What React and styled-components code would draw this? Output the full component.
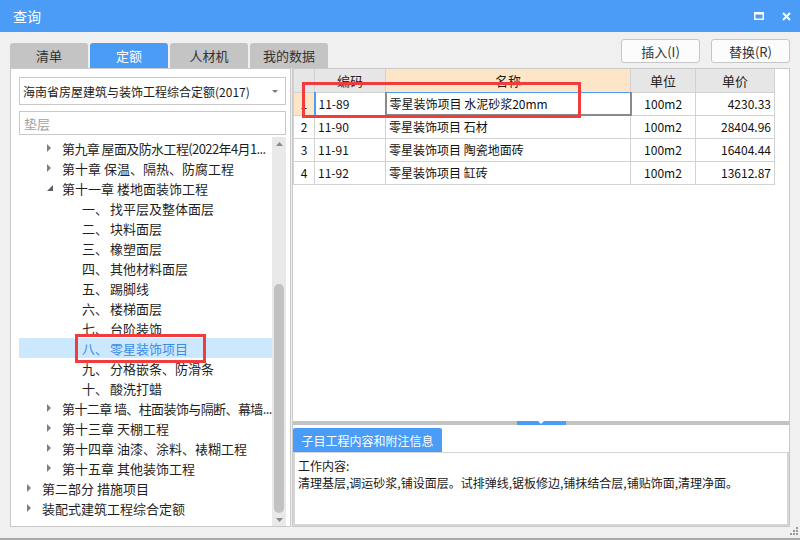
import React from 'react'
import styled, { createGlobalStyle } from 'styled-components'

const GlobalStyle = createGlobalStyle`
    html, body {
        margin: 0;
        padding: 0;
    }
    body {
        width: 800px;
        height: 540px;
        overflow: hidden;
        background: #f0f0f0;
        font-family: "Noto Sans CJK SC", "Noto Sans", sans-serif;
    }
    * {
        box-sizing: border-box;
    }
`

const Window = styled.div`
    position: relative;
    display: flex;
    flex-direction: column;
    width: 800px;
    height: 540px;
    background: #f0f0f0;
    border-bottom: 2px solid #a9a9a9;
`

const TitleBar = styled.div`
    display: flex;
    align-items: center;
    justify-content: space-between;
    height: 32px;
    padding: 0 9px 0 13px;
    background: #4a9cf6;
    color: #fff;
    font-size: 14px;
`

const WinButtons = styled.div`
    display: flex;
    align-items: center;
    gap: 18px;
`

const Body = styled.div`
    display: flex;
    flex-direction: column;
    flex: 1;
    padding: 0 10px;
`

const TopRow = styled.div`
    display: flex;
    justify-content: space-between;
    height: 36px;
`

const Tabs = styled.div`
    display: flex;
    align-items: flex-end;
    gap: 2px;
`

const Tab = styled.div`
    width: 78px;
    height: 25px;
    display: flex;
    align-items: center;
    justify-content: center;
    font-size: 13px;
    border-radius: 3px 3px 0 0;
    background: ${p => p.$active ? '#4a9cf6' : '#c4c4c4'};
    color: ${p => p.$active ? '#fff' : '#333'};
`

const Actions = styled.div`
    display: flex;
    gap: 11px;
    padding-top: 7px;
`

const Button = styled.div`
    width: 79px;
    height: 24px;
    display: flex;
    align-items: center;
    justify-content: center;
    background: #fcfcfc;
    border: 1px solid #c6c6c6;
    border-radius: 3px;
    font-size: 13px;
    color: #333;
`

const Main = styled.div`
    display: flex;
    gap: 1px;
    height: 459px;
`

const LeftPanel = styled.div`
    display: flex;
    flex-direction: column;
    width: 281px;
    background: #fff;
    border: 1px solid #c9c9c9;
    padding: 8px 4px 0 8px;
`

const Select = styled.div`
    display: flex;
    align-items: center;
    justify-content: space-between;
    height: 28px;
    padding: 0 7px 0 3px;
    border: 1px solid #c9c9c9;
    font-size: 12px;
    color: #1a1a1a;
    white-space: nowrap;
`

const Search = styled.div`
    display: flex;
    align-items: center;
    height: 24px;
    margin-top: 6px;
    padding-left: 4px;
    border: 1px solid #c9c9c9;
    font-size: 13px;
    color: #a3a3a3;
`

const TreeWrap = styled.div`
    display: flex;
    flex: 1;
    margin-top: 2px;
    min-height: 0;
`

const Tree = styled.div`
    flex: 1;
    padding-top: 1px;
    overflow: hidden;
`

const Row = styled.div`
    display: flex;
    align-items: center;
    height: 20px;
    padding-left: ${p => 8 + p.$level * 20}px;
    font-size: 13px;
    white-space: nowrap;
    overflow: hidden;
    letter-spacing: ${p => p.$tight ? '-0.6px' : 'normal'};
    background: ${p => p.$selected ? '#cce8ff' : 'transparent'};
    color: ${p => p.$selected ? '#3b8ae6' : '#1f1f1f'};
`

const Toggle = styled.span`
    display: flex;
    align-items: center;
    flex: none;
    width: 15px;
    height: 20px;
`

const Num = styled.span`
    display: inline-block;
    flex: none;
    width: 28px;
`

const Scrollbar = styled.div`
    display: flex;
    flex-direction: column;
    align-items: center;
    width: 14px;
    background: #e9e9e9;
`

const ScrollArrow = styled.div`
    display: flex;
    align-items: center;
    justify-content: center;
    height: 14px;
`

const Track = styled.div`
    flex: 1;
    display: flex;
    flex-direction: column;
`

const Thumb = styled.div`
    width: 10px;
    height: ${p => p.$size}px;
    margin-top: ${p => p.$offset}px;
    border-radius: 5px;
    background: #c2c2c2;
`

const RightPanel = styled.div`
    display: flex;
    flex-direction: column;
    width: 498px;
    background: #fff;
    border: 1px solid #c9c9c9;
`

const TableArea = styled.div`
    height: 352px;
`

const Table = styled.table`
    border-collapse: collapse;
    table-layout: fixed;
    width: 481px;
`

const HeadCell = styled.th`
    height: 23px;
    padding: 0;
    font-size: 13px;
    font-weight: normal;
    color: #222;
    background: ${p => p.$active ? '#fde6c8' : '#e6e6e6'};
    border: 1px solid #d2d2d2;
    border-top: none;
    border-bottom: 1px solid ${p => p.$active ? '#4a9cf6' : '#d2d2d2'};
`

const Cell = styled.td`
    height: 23px;
    padding: 0 3px;
    font-size: 12px;
    color: #111;
    white-space: nowrap;
    overflow: hidden;
    text-align: ${p => p.$align || 'left'};
    background: ${p => p.$mark ? '#fde6c8' : '#fff'};
    border: 1px solid #d2d2d2;
    ${p => p.$lead && 'border-left: 2px solid #4a9cf6;'}
    ${p => p.$focus && `
        border: 2px solid #8a8a8a;
        border-top: 1px solid #4a9cf6;
    `}
`

const Splitter = styled.div`
    display: flex;
    justify-content: center;
    height: 4px;
    background: #c3c3c3;
`

const Handle = styled.div`
    display: flex;
    justify-content: center;
    width: 49px;
    background: #4a9cf6;
`

const InfoTabs = styled.div`
    display: flex;
    height: 27px;
    padding-top: 3px;
`

const InfoTab = styled.div`
    display: flex;
    align-items: center;
    justify-content: center;
    width: 149px;
    background: #4a9cf6;
    color: #fff;
    font-size: 12px;
    border-radius: 2px 2px 0 0;
`

const InfoBox = styled.div`
    flex: 1;
    padding: 4px 3px;
    border: 2px solid #d6d6d6;
    border-top-width: 1px;
    font-size: 12px;
    line-height: 17px;
    color: #1a1a1a;
`

const Mark = styled.div`
    position: absolute;
    left: ${p => p.$x}px;
    top: ${p => p.$y}px;
    width: ${p => p.$w}px;
    height: ${p => p.$h}px;
    border: 3px solid #f03c3c;
    pointer-events: none;
`

const Grip = styled.svg`
    position: absolute;
    right: 2px;
    bottom: 3px;
`

const treeRows = [
    { level: 1, toggle: 'closed', text: '第九章 屋面及防水工程(2022年4月1...', tight: true },
    { level: 1, toggle: 'closed', text: '第十章 保温、隔热、防腐工程' },
    { level: 1, toggle: 'open', text: '第十一章 楼地面装饰工程' },
    { level: 2, num: '一、', text: '找平层及整体面层' },
    { level: 2, num: '二、', text: '块料面层' },
    { level: 2, num: '三、', text: '橡塑面层' },
    { level: 2, num: '四、', text: '其他材料面层' },
    { level: 2, num: '五、', text: '踢脚线' },
    { level: 2, num: '六、', text: '楼梯面层' },
    { level: 2, num: '七、', text: '台阶装饰' },
    { level: 2, num: '八、', text: '零星装饰项目', selected: true },
    { level: 2, num: '九、', text: '分格嵌条、防滑条' },
    { level: 2, num: '十、', text: '酸洗打蜡' },
    { level: 1, toggle: 'closed', text: '第十二章 墙、柱面装饰与隔断、幕墙...', tight: true },
    { level: 1, toggle: 'closed', text: '第十三章 天棚工程' },
    { level: 1, toggle: 'closed', text: '第十四章 油漆、涂料、裱糊工程' },
    { level: 1, toggle: 'closed', text: '第十五章 其他装饰工程' },
    { level: 0, toggle: 'closed', text: '第二部分 措施项目' },
    { level: 0, toggle: 'closed', text: '装配式建筑工程综合定额' },
]

const items = [
    { code: '11-89', name: '零星装饰项目  水泥砂浆20mm', unit: '100m2', price: '4230.33' },
    { code: '11-90', name: '零星装饰项目  石材', unit: '100m2', price: '28404.96' },
    { code: '11-91', name: '零星装饰项目  陶瓷地面砖', unit: '100m2', price: '16404.44' },
    { code: '11-92', name: '零星装饰项目  缸砖', unit: '100m2', price: '13612.87' },
]

const Arrow = ({ type }) => {
    if (type === 'open') {
        return (
            <svg width="6" height="6" viewBox="0 0 6 6">
                <path d="M6 0 L6 6 L0 6 Z" fill="#5f5f5f" />
            </svg>
        )
    }
    if (type === 'closed') {
        return (
            <svg width="4" height="8" viewBox="0 0 4 8">
                <path d="M0 0 L4 4 L0 8 Z" fill="#808080" />
            </svg>
        )
    }
    return null
}

const Triangle = ({ down, color = '#8a8a8a', w = 7, h = 4 }) => (
    <svg width={w} height={h} viewBox={`0 0 ${w} ${h}`}>
        <path d={down ? `M0 0 L${w} 0 L${w / 2} ${h} Z` : `M0 ${h} L${w} ${h} L${w / 2} 0 Z`} fill={color} />
    </svg>
)

const App = () => {
    return (
        <Window>
            <GlobalStyle />
            <TitleBar>
                <span>查询</span>
                <WinButtons>
                    <svg width="10" height="8" viewBox="0 0 10 8">
                        <rect x="0.75" y="1" width="8.5" height="6.25" fill="none" stroke="#fff" strokeWidth="1.5" />
                        <rect x="0" y="0" width="10" height="2.5" fill="#fff" />
                    </svg>
                    <svg width="9" height="9" viewBox="0 0 9 9">
                        <path d="M1 1 L8 8 M8 1 L1 8" stroke="#fff" strokeWidth="2" />
                    </svg>
                </WinButtons>
            </TitleBar>
            <Body>
                <TopRow>
                    <Tabs>
                        <Tab>清单</Tab>
                        <Tab $active>定额</Tab>
                        <Tab>人材机</Tab>
                        <Tab>我的数据</Tab>
                    </Tabs>
                    <Actions>
                        <Button>插入(I)</Button>
                        <Button>替换(R)</Button>
                    </Actions>
                </TopRow>
                <Main>
                    <LeftPanel>
                        <Select>
                            <span>海南省房屋建筑与装饰工程综合定额(2017)</span>
                            <Triangle down w={6} h={3} color="#7a7a7a" />
                        </Select>
                        <Search>垫层</Search>
                        <TreeWrap>
                            <Tree>
                                {treeRows.map((r, i) => (
                                    <Row key={i} $level={r.level} $selected={r.selected} $tight={r.tight}>
                                        <Toggle><Arrow type={r.toggle} /></Toggle>
                                        {r.num && <Num>{r.num}</Num>}
                                        <span>{r.text}</span>
                                    </Row>
                                ))}
                            </Tree>
                            <Scrollbar>
                                <ScrollArrow><Triangle /></ScrollArrow>
                                <Track>
                                    <Thumb $offset={134} $size={229} />
                                </Track>
                                <ScrollArrow><Triangle down /></ScrollArrow>
                            </Scrollbar>
                        </TreeWrap>
                    </LeftPanel>
                    <RightPanel>
                        <TableArea>
                            <Table>
                                <colgroup>
                                    <col style={{ width: 21 }} />
                                    <col style={{ width: 71 }} />
                                    <col style={{ width: 245 }} />
                                    <col style={{ width: 65 }} />
                                    <col style={{ width: 79 }} />
                                </colgroup>
                                <thead>
                                    <tr>
                                        <HeadCell />
                                        <HeadCell>编码</HeadCell>
                                        <HeadCell $active>名称</HeadCell>
                                        <HeadCell>单位</HeadCell>
                                        <HeadCell>单价</HeadCell>
                                    </tr>
                                </thead>
                                <tbody>
                                    {items.map((it, i) => (
                                        <tr key={it.code}>
                                            <Cell $align="center" $mark={i === 0}>{i + 1}</Cell>
                                            <Cell $lead={i === 0}>{it.code}</Cell>
                                            <Cell $focus={i === 0}>{it.name}</Cell>
                                            <Cell $align="center">{it.unit}</Cell>
                                            <Cell $align="right">{it.price}</Cell>
                                        </tr>
                                    ))}
                                </tbody>
                            </Table>
                        </TableArea>
                        <Splitter>
                            <Handle><Triangle down w={6} h={3} color="#fff" /></Handle>
                        </Splitter>
                        <InfoTabs>
                            <InfoTab>子目工程内容和附注信息</InfoTab>
                        </InfoTabs>
                        <InfoBox>
                            <div>工作内容:</div>
                            <div>清理基层,调运砂浆,铺设面层。试排弹线,锯板修边,铺抹结合层,铺贴饰面,清理净面。</div>
                        </InfoBox>
                    </RightPanel>
                </Main>
            </Body>
            <Mark $x={302} $y={82} $w={279} $h={36} />
            <Mark $x={75} $y={334} $w={131} $h={29} />
            <Grip width="9" height="9" viewBox="0 0 9 9">
                {[[7, 1], [4, 4], [7, 4], [1, 7], [4, 7], [7, 7]].map(([x, y]) => (
                    <rect key={`${x}-${y}`} x={x} y={y} width="2" height="2" fill="#9a9a9a" />
                ))}
            </Grip>
        </Window>
    )
}

export default App
